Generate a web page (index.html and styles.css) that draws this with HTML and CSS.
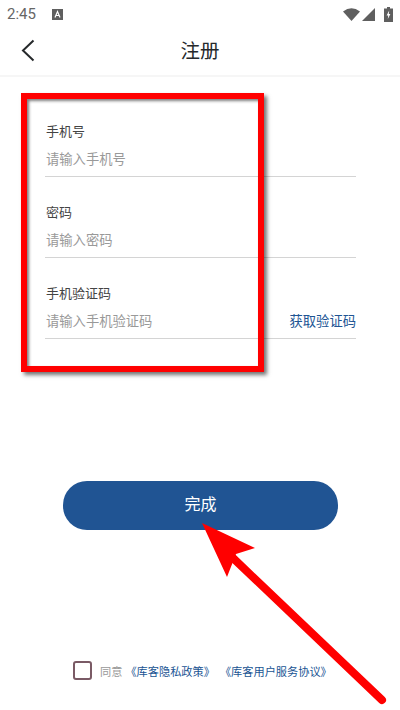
FILE: index.html
```html
<!DOCTYPE html>
<html>
<head>
    <meta charset="UTF-8">
    <title>注册</title>
    <link rel="stylesheet" href="styles.css">
</head>
<body>
    <div class="page">
        <div class="status">
            <span class="time">2:45</span>
            <svg class="status-a" width="11" height="11" viewBox="0 0 11 11">
                <rect width="11" height="11" fill="#5f5f5f"/>
                <path d="M3 8.5 L5.5 2.5 L8 8.5 M4 6.5 H7" fill="none" stroke="#fff" stroke-width="1.2"/>
            </svg>
            <span class="status-right">
                <svg width="17" height="13" viewBox="0 0 17 13"><path d="M0 3.5 Q8.5 -3 17 3.5 L8.5 13 Z" fill="#5f5f5f"/></svg>
                <svg width="13" height="13" viewBox="0 0 13 13"><path d="M13 0 V13 H0 Z" fill="#5f5f5f"/></svg>
                <svg class="battery" width="9" height="15" viewBox="0 0 9 15">
                    <path d="M3 0 H6 V1.5 H9 V15 H0 V1.5 H3 Z" fill="#5f5f5f"/>
                    <path d="M5.2 3.5 L2.6 8.6 H4.2 L3.8 12 L6.4 6.9 H4.8 Z" fill="#fff"/>
                </svg>
            </span>
        </div>

        <div class="header">
            <svg class="back" width="14" height="23" viewBox="0 0 14 23">
                <path d="M12.5 1.5 L2 11.5 L12.5 21.5" fill="none" stroke="#26292b" stroke-width="2"/>
            </svg>
            <span class="title">注册</span>
        </div>

        <div class="form">
            <div class="field">
                <div class="label">手机号</div>
                <div class="input"><span class="hint">请输入手机号</span></div>
            </div>
            <div class="field">
                <div class="label">密码</div>
                <div class="input"><span class="hint">请输入密码</span></div>
            </div>
            <div class="field">
                <div class="label">手机验证码</div>
                <div class="input"><span class="hint">请输入手机验证码</span><a class="code" href="javascript:;">获取验证码</a></div>
            </div>
        </div>

        <a class="done" href="javascript:;">完成</a>

        <div class="agree">
            <span class="check"></span>
            <span class="agree-text">同意</span>
            <a class="agree-link first" href="javascript:;">《库客隐私政策》</a>
            <a class="agree-link" href="javascript:;">《库客用户服务协议》</a>
        </div>

        <!-- 红色标注 -->
        <div class="mark-box"></div>
        <svg class="mark-arrow" width="400" height="710" viewBox="0 0 400 710">
            <path d="M233 558 L382 700" fill="none" stroke="#f00" stroke-width="8" stroke-linecap="round"/>
            <path d="M202 523 L255 548 L236 554 L227 577 Z" fill="#f00"/>
        </svg>
    </div>
</body>
</html>
```
FILE: styles.css
```css
* {
    margin: 0;
    padding: 0;
    box-sizing: border-box;
}
a {
    text-decoration: none;
}
body {
    background-color: #fff;
    font-family: "Roboto", "Noto Sans CJK SC", sans-serif;
}
.page {
    position: relative;
    width: 400px;
    height: 710px;
    overflow: hidden;
    display: flex;
    flex-direction: column;
}
.status {
    display: flex;
    align-items: center;
    height: 28px;
    padding: 0 7px;
    color: #666;
}
.time {
    font-size: 15px;
    width: 45px;
}
.status-right {
    display: flex;
    align-items: center;
    gap: 2px;
    margin-left: auto;
}
.battery {
    margin-left: 7px;
}
.header {
    position: relative;
    display: flex;
    align-items: center;
    justify-content: center;
    height: 49px;
    padding-bottom: 4px;
    border-bottom: 2px solid #f6f6f6;
}
.back {
    position: absolute;
    left: 21px;
    top: 11px;
}
.title {
    font-size: 19.5px;
    color: #26292b;
}
.form {
    display: flex;
    flex-direction: column;
    gap: 23px;
    padding: 42px 44px 0 45px;
}
.label {
    height: 26px;
    line-height: 26px;
    padding-left: 1px;
    font-size: 13px;
    color: #444;
}
.input {
    display: flex;
    justify-content: space-between;
    align-items: center;
    height: 32px;
    padding: 0 0 5px 1px;
    border-bottom: 1px solid #d4d4d4;
    font-size: 13.3px;
}
.hint {
    color: #999;
}
.code {
    color: #205493;
}
.done {
    display: block;
    width: 275px;
    height: 49px;
    margin: 142px 0 0 63px;
    border-radius: 24px;
    background-color: #205493;
    line-height: 48px;
    text-align: center;
    font-size: 16px;
    color: #fff;
}
.agree {
    display: flex;
    align-items: center;
    margin: 131px 0 0 73px;
    font-size: 11.2px;
}
.check {
    width: 19px;
    height: 19px;
    border: 2px solid #7a5a65;
    border-radius: 3px;
    margin-right: 8px;
}
.agree-text {
    color: #999;
    margin-right: 1px;
}
.agree-link {
    color: #205493;
    margin-left: 5px;
}
.agree-link.first {
    margin-left: 2px;
}
.mark-box {
    position: absolute;
    left: 21px;
    top: 93px;
    width: 243px;
    height: 279px;
    border: 6px solid #f00;
    box-shadow: 3px 3px 4px rgba(0, 0, 0, .55), inset 2px 2px 3px rgba(0, 0, 0, .5);
}
.mark-arrow {
    position: absolute;
    left: 0;
    top: 0;
}
```
